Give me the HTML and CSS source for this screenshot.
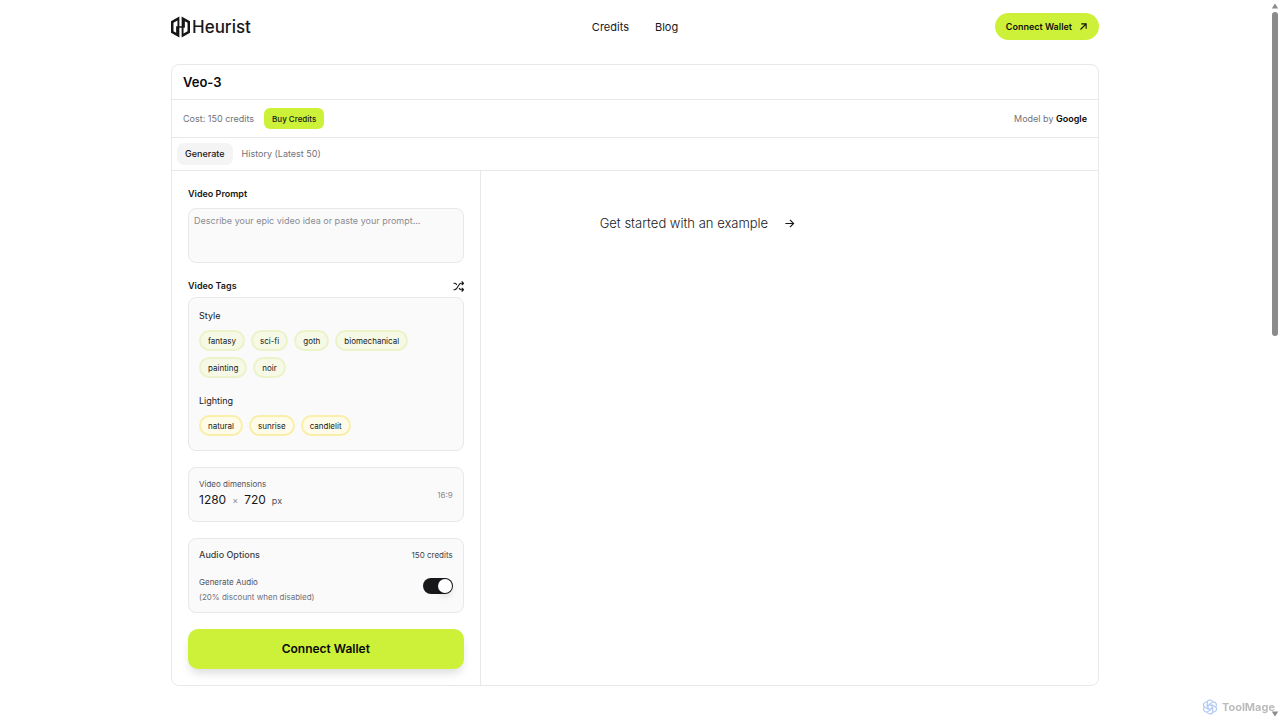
FILE: index.html
```html
<!DOCTYPE html>
<html lang="en">
<head>
<meta charset="utf-8">
<meta name="viewport" content="width=device-width, initial-scale=1">
<title>Veo-3 | Heurist</title>
<link rel="stylesheet" href="styles.css">
</head>
<body>
<div class="page">
  <header class="header">
    <a class="brand" href="#">
      <svg class="brand-mark" viewBox="0 0 20 22" aria-hidden="true">
        <path fill="#151515" fill-rule="evenodd" d="M0 5 8.800 0V10.200H11.200V0L20 5V17L11.200 22V11.800H8.800V22L0 17ZM2.600 6.500V15.500L5.400 17V10.200H6.800V4.100ZM17.400 6.500V15.500L13.200 17.900V11.800H14.600V5Z"/>
      </svg>
      <span class="brand-name">Heurist</span>
    </a>
    <nav class="nav">
      <a href="#">Credits</a>
      <a href="#">Blog</a>
    </nav>
    <button class="wallet" type="button">Connect Wallet
      <svg class="icon-sm" viewBox="0 0 24 24" aria-hidden="true"><path d="M4 20 19 5M6 5h13v13"/></svg>
    </button>
  </header>

  <main class="card">
    <h1 class="title">Veo-3</h1>
    <div class="info">
      <span class="muted">Cost: 150 credits</span>
      <button class="buy" type="button">Buy Credits</button>
      <span class="muted model">Model by <strong>Google</strong></span>
    </div>
    <div class="tabs">
      <button class="tab tab-active" type="button">Generate</button>
      <button class="tab" type="button">History (Latest 50)</button>
    </div>
    <div class="columns">
      <form class="form">
        <label class="label" for="prompt">Video Prompt</label>
        <textarea class="prompt" id="prompt" placeholder="Describe your epic video idea or paste your prompt..."></textarea>
        <div class="label-row">
          <h2 class="label">Video Tags</h2>
          <button class="shuffle" type="button" aria-label="Shuffle tags">
            <svg viewBox="0 0 24 24" aria-hidden="true"><path d="M1 19h2.500c1.700 0 3-.8 4-2.200L14 7.200C15 5.800 16.300 5 18 5h5M1 5h2.500c1.700 0 3 .8 4 2.200l.8 1.200M23 19h-5c-1.700 0-3-.8-4-2.200l-.8-1.200M19 1l4 4-4 4M19 15l4 4-4 4"/></svg>
          </button>
        </div>
        <section class="panel tags">
          <h3 class="group">Style</h3>
          <div class="chips chips-style">
            <button type="button">fantasy</button>
            <button type="button">sci-fi</button>
            <button type="button">goth</button>
            <button type="button">biomechanical</button>
            <button type="button">painting</button>
            <button type="button">noir</button>
          </div>
          <h3 class="group">Lighting</h3>
          <div class="chips chips-light">
            <button type="button">natural</button>
            <button type="button">sunrise</button>
            <button type="button">candlelit</button>
          </div>
        </section>
        <section class="panel dims">
          <div>
            <div class="dims-label">Video dimensions</div>
            <div class="dims-value"><span>1280</span><span class="times">×</span><span>720</span><span class="unit">px</span></div>
          </div>
          <span class="ratio">16:9</span>
        </section>
        <section class="panel audio">
          <div class="audio-head">
            <h2>Audio Options</h2>
            <span>150 credits</span>
          </div>
          <div class="audio-row">
            <label for="audio">Generate Audio<small>(20% discount when disabled)</small></label>
            <input class="switch" id="audio" type="checkbox" role="switch" checked>
          </div>
        </section>
        <button class="submit" type="button">Connect Wallet</button>
      </form>
      <section class="stage">
        <a class="example" href="#">Get started with an example
          <svg class="icon-md" viewBox="0 0 24 24" aria-hidden="true"><path d="M3 12h18M13 4l8 8-8 8"/></svg>
        </a>
      </section>
    </div>
  </main>
</div>

<div class="watermark">
  <svg viewBox="0 0 24 24" aria-hidden="true">
    <g fill="none" stroke="#a9c4f5" stroke-width="1.6">
      <path id="petal" d="M12 8.500 7.800 11V5.500C7.800 3 9.500 1.500 12 1.500c2 0 3.500 1 4.200 2.800"/>
      <use href="#petal" transform="rotate(60 12 12)"/>
      <use href="#petal" transform="rotate(120 12 12)"/>
      <use href="#petal" transform="rotate(180 12 12)"/>
      <use href="#petal" transform="rotate(240 12 12)"/>
      <use href="#petal" transform="rotate(300 12 12)"/>
    </g>
  </svg>
  <span>ToolMage</span>
</div>

<div class="scrollbar" aria-hidden="true">
  <svg viewBox="0 0 8 6"><path d="M4 0.500 7.200 5.500H0.800Z"/></svg>
  <div class="scroll-track"><div class="scroll-thumb"></div></div>
  <svg viewBox="0 0 8 6"><path d="M4 5.500 7.200 0.500H0.800Z"/></svg>
</div>
</body>
</html>
```

FILE: styles.css
```css
* { box-sizing: border-box; }

body {
  margin: 0;
  padding-right: 10px;
  background: #fff;
  color: #18181b;
  font: 9px/16px Inter, "Liberation Sans", sans-serif;
}

button, textarea { font: inherit; color: inherit; }
button { border: 0; padding: 0; background: none; cursor: pointer; }
a { color: inherit; text-decoration: none; }
h1, h2, h3 { margin: 0; font: inherit; }
svg { display: block; }

.page {
  max-width: 928px;
  margin: 0 auto;
}

.header {
  display: grid;
  grid-template-columns: 1fr auto 1fr;
  align-items: center;
  height: 53px;
  margin-bottom: 11px;
}

.brand { display: flex; align-items: center; gap: 2px; }
.brand-mark { width: 19px; height: 22px; }
.brand-name { font-size: 17px; line-height: 22px; font-weight: 500; }

.nav { display: flex; gap: 26px; font-size: 11px; }

.wallet {
  display: flex;
  align-items: center;
  gap: 7px;
  justify-self: end;
  height: 27px;
  padding: 0 11px;
  border-radius: 14px;
  background: #cdf138;
  color: #111;
  font-weight: 600;
}

.icon-sm, .icon-md, .shuffle svg {
  fill: none;
  stroke: currentColor;
  stroke-width: 2.5;
}
.icon-sm { width: 9px; height: 9px; stroke-width: 3; }
.icon-md { width: 11px; height: 11px; }

.card {
  border: 1px solid #e8e8ea;
  border-radius: 8px;
}

.title {
  padding: 7px 11px;
  border-bottom: 1px solid #e8e8ea;
  font-size: 13px;
  line-height: 20px;
  font-weight: 600;
  color: #09090b;
}

.info {
  display: flex;
  align-items: center;
  gap: 10px;
  padding: 8px 11px;
  border-bottom: 1px solid #e8e8ea;
}
.muted { color: #71717a; }
.muted strong { color: #09090b; font-weight: 600; }
.model { margin-left: auto; }

.buy {
  height: 21px;
  padding: 0 8px;
  border-radius: 6px;
  background: #cdf138;
  color: #18181b;
  font-size: 8px;
  font-weight: 500;
}

.tabs {
  display: flex;
  gap: 1px;
  padding: 5px;
  border-bottom: 1px solid #e8e8ea;
}
.tab { height: 22px; padding: 0 8px; border-radius: 7px; color: #71717a; }
.tab-active { background: #f4f4f5; color: #18181b; font-weight: 500; }

.columns { display: grid; grid-template-columns: 1fr 2fr; }

.form {
  display: flex;
  flex-direction: column;
  padding: 15px 16px 16px;
  border-right: 1px solid #e8e8ea;
}

.label { font-weight: 600; }

.prompt {
  height: 55px;
  margin: 6px 0 15px;
  padding: 4px 5px;
  border: 1px solid #e8e8ea;
  border-radius: 8px;
  background: #fafafa;
  resize: none;
}
.prompt::placeholder { color: #8b8b93; opacity: 1; }

.label-row {
  display: flex;
  justify-content: space-between;
  align-items: center;
  margin-bottom: 3px;
}
.shuffle svg { width: 11px; height: 11px; }

.panel {
  margin-bottom: 16px;
  padding: 10px;
  border: 1px solid #e8e8ea;
  border-radius: 8px;
  background: #fafafa;
}

.tags { padding: 10px 10px 14px; }
.group { margin-bottom: 6px; }
.chips { display: flex; flex-wrap: wrap; gap: 6px; }
.chips button {
  height: 21px;
  padding: 0 7px;
  border: 2px solid #ebf3cb;
  border-radius: 11px;
  background: #f5f9e5;
  font-size: 8px;
}
.chips-style { margin-bottom: 15px; }
.chips-light button { border-color: #f9efab; background: #fefce8; }

.dims { display: flex; justify-content: space-between; align-items: center; }
.dims-label { font-size: 8px; line-height: 12px; color: #52525b; }
.dims-value {
  display: flex;
  align-items: baseline;
  gap: 6px;
  font-size: 12px;
  line-height: 20px;
}
.times { font-size: 9px; color: #8b8b93; }
.unit { font-size: 9px; color: #52525b; }
.ratio { font-size: 8px; color: #8b8b93; }

.audio { padding: 8px 10px 7px; }
.audio-head { display: flex; justify-content: space-between; font-size: 8px; color: #3f3f46; }
.audio-head h2 { font-size: 9px; font-weight: 500; }
.audio-row {
  display: flex;
  justify-content: space-between;
  align-items: center;
  margin-top: 12px;
  font-size: 8px;
  line-height: 15px;
  color: #52525b;
}
.audio-row small { display: block; font-size: 8px; color: #71717a; }

.switch {
  appearance: none;
  display: flex;
  width: 30px;
  height: 16px;
  margin: 0 0 8px;
  padding: 1px;
  border-radius: 8px;
  background: #18181b;
}
.switch::before {
  content: "";
  width: 14px;
  height: 14px;
  border-radius: 7px;
  background: #fff;
  box-shadow: 0 4px 6px rgba(0, 0, 0, 0.1);
}
.switch:checked { justify-content: flex-end; }

.submit {
  height: 40px;
  border-radius: 10px;
  background: #cdf138;
  color: #09090b;
  font-size: 12px;
  font-weight: 600;
  box-shadow: 0 6px 10px -2px rgba(0, 0, 0, 0.14);
}

.stage { padding: 42px 119px; }
.example {
  display: flex;
  align-items: center;
  gap: 16px;
  font-size: 13px;
  line-height: 20px;
  font-weight: 300;
}

.watermark {
  position: fixed;
  right: 5px;
  bottom: 5px;
  display: flex;
  align-items: center;
  gap: 4px;
  color: #bcbcbc;
  font-size: 11px;
  line-height: 16px;
  font-weight: 700;
}
.watermark svg { width: 16px; height: 16px; }

.scrollbar {
  position: fixed;
  top: 0;
  right: 0;
  bottom: 0;
  display: flex;
  flex-direction: column;
  align-items: center;
  gap: 3px;
  width: 10px;
  padding: 3px 0;
}
.scrollbar svg { width: 8px; height: 6px; fill: #8b8b8b; }
.scroll-track { flex: 1; width: 6px; }
.scroll-thumb { height: 46.5%; border-radius: 3px; background: #8b8b8b; }
```
